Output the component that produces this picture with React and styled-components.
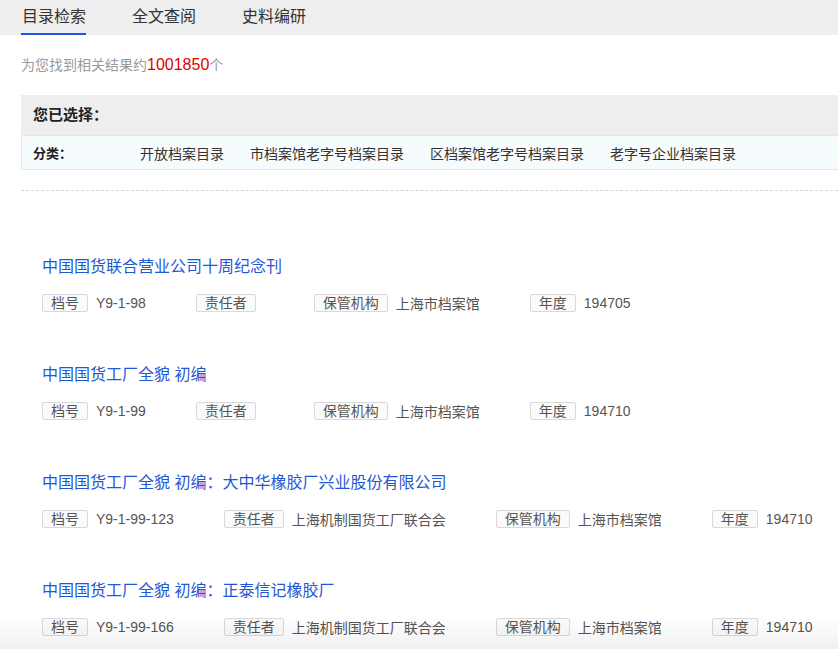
import React from 'react';
import styled, {createGlobalStyle} from 'styled-components';

const tabs = ['目录检索', '全文查阅', '史料编研'];
const categories = ['开放档案目录', '市档案馆老字号档案目录', '区档案馆老字号档案目录', '老字号企业档案目录'];

const results = [
  {
    title: '中国国货联合营业公司十周纪念刊',
    fields: [['档号', 'Y9-1-98'], ['责任者', ''], ['保管机构', '上海市档案馆'], ['年度', '194705']],
  },
  {
    title: '中国国货工厂全貌 初编',
    fields: [['档号', 'Y9-1-99'], ['责任者', ''], ['保管机构', '上海市档案馆'], ['年度', '194710']],
  },
  {
    title: '中国国货工厂全貌 初编：大中华橡胶厂兴业股份有限公司',
    fields: [['档号', 'Y9-1-99-123'], ['责任者', '上海机制国货工厂联合会'], ['保管机构', '上海市档案馆'], ['年度', '194710']],
  },
  {
    title: '中国国货工厂全貌 初编：正泰信记橡胶厂',
    fields: [['档号', 'Y9-1-99-166'], ['责任者', '上海机制国货工厂联合会'], ['保管机构', '上海市档案馆'], ['年度', '194710']],
  },
];

function App() {
  return (
    <>
      <GlobalStyle />
      <TabBar>
        {tabs.map((t, i) => (
          <Tab key={t} active={i === 0}>{t}</Tab>
        ))}
      </TabBar>

      <Summary>为您找到相关结果约<Count>1001850</Count>个</Summary>

      <SelectedBox>
        <BoxHeader>您已选择：</BoxHeader>
        <CategoryRow>
          <CategoryLabel>分类：</CategoryLabel>
          {categories.map(c => (
            <CategoryItem key={c}>{c}</CategoryItem>
          ))}
        </CategoryRow>
      </SelectedBox>

      <Divider />

      <ResultList>
        {results.map((r, index) => (
          <Result key={index}>
            <Title href="#">{r.title}</Title>
            <MetaRow>
              {r.fields.map(([label, value]) => (
                <Field key={label}>
                  <Tag>{label}</Tag>
                  <Value>{value}</Value>
                </Field>
              ))}
            </MetaRow>
          </Result>
        ))}
      </ResultList>

      <BottomShade />
    </>
  );
}

export default App;

const GlobalStyle = createGlobalStyle`
body {
  margin: 0;
  overflow: hidden;
  background: #fff;
  font-family: "Liberation Sans", "Noto Sans CJK SC", sans-serif;
  color: #333;
}
`

const TabBar = styled.div`
display: flex;
height: 35px;
background: #eeeeee;
padding-left: 21px;
gap: 45px;
`

const Tab = styled.div`
height: 35px;
box-sizing: border-box;
padding-left: 1px;
line-height: 33px;
font-size: 16px;
color: #333;
border-bottom: 2px solid ${props => props.active ? '#1f56de' : 'transparent'};
`

const Summary = styled.div`
margin: 20px 0 0 21px;
height: 20px;
font-size: 14px;
line-height: 20px;
color: #999;
`

const Count = styled.span`
font-size: 16px;
color: #e00000;
`

const SelectedBox = styled.div`
margin: 20px -30px 0 21px;
`

const BoxHeader = styled.div`
height: 40px;
line-height: 40px;
background: #eeeeee;
padding-left: 12px;
font-size: 15px;
font-weight: bold;
color: #222;
`

const CategoryRow = styled.div`
display: flex;
align-items: center;
height: 35px;
box-sizing: border-box;
border: 1px solid #d2ecf8;
background: #f6fbfe;
padding-left: 11px;
`

const CategoryLabel = styled.div`
width: 107px;
font-size: 13px;
font-weight: bold;
color: #222;
`

const CategoryItem = styled.a`
margin-right: 26px;
font-size: 14px;
color: #333;
text-decoration: none;
`

const Divider = styled.div`
margin: 20px 0 0 21px;
border-top: 1px dashed #d5d5d5;
`

const ResultList = styled.div`
padding: 64px 0 0 42px;
display: flex;
flex-direction: column;
gap: 50px;
`

const Result = styled.div`
display: flex;
flex-direction: column;
gap: 14px;
`

const Title = styled.a`
font-size: 16px;
line-height: 24px;
color: #1f58d4;
text-decoration: none;
white-space: nowrap;
`

const MetaRow = styled.div`
display: flex;
align-items: center;
height: 20px;
white-space: nowrap;
`

const Field = styled.div`
display: flex;
align-items: center;
margin-right: 50px;
`

const Tag = styled.span`
display: inline-block;
padding: 0 8px;
height: 18px;
box-sizing: border-box;
line-height: 16px;
font-size: 14px;
color: #555;
background: #fbfbfb;
border: 1px solid #d9d9d9;
border-radius: 2px;
`

const Value = styled.span`
margin-left: 8px;
font-size: 14px;
color: #555;
`

const BottomShade = styled.div`
position: fixed;
left: 0;
right: 0;
bottom: 0;
height: 32px;
pointer-events: none;
background: linear-gradient(rgba(0, 0, 0, 0), rgba(0, 0, 0, 0.06));
`
